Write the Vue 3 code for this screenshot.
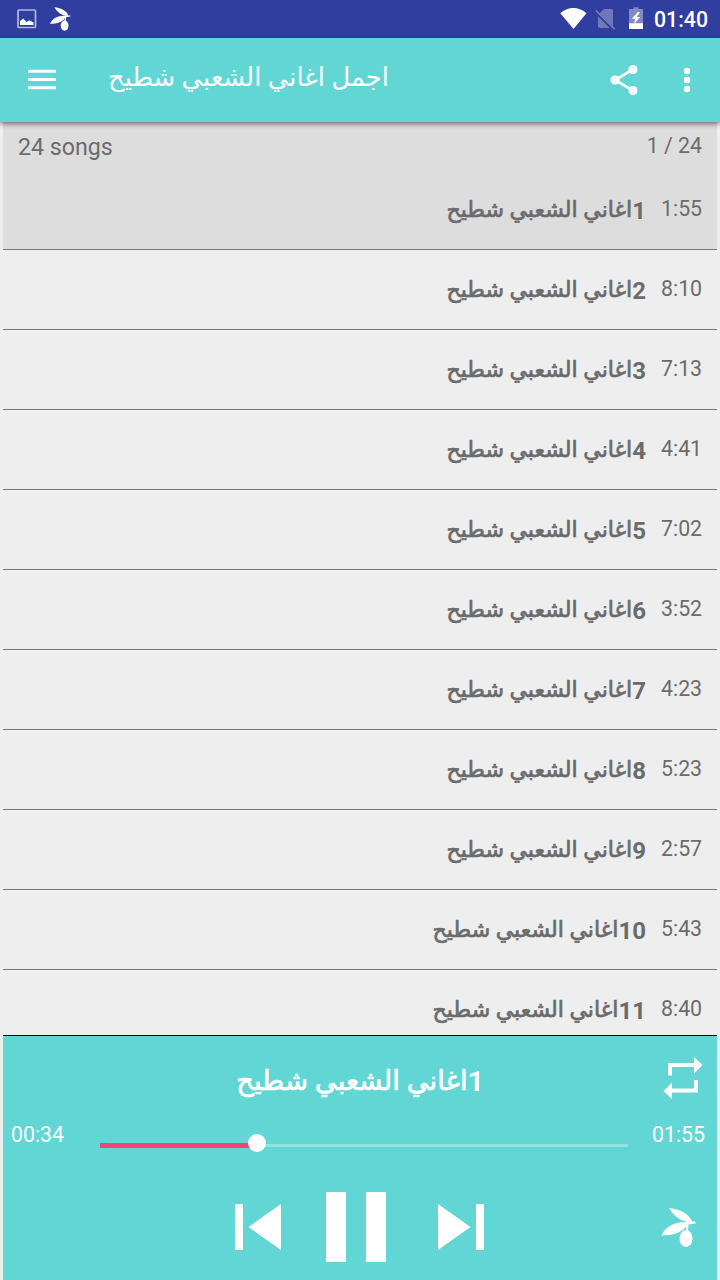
<script setup>
const durations = ['1:55', '8:10', '7:13', '4:41', '7:02', '3:52', '4:23', '5:23', '2:57', '5:43', '8:40']
const songs = durations.map((time, i) => ({ id: i + 1, time }))
const name = 'اغاني الشعبي شطيح'
const progress = 29.7
</script>

<template>
  <div class="screen">
    <div class="status">
      <svg class="s-left" width="80" height="38" viewBox="0 0 80 38">
        <rect x="18" y="10" width="17.5" height="17.5" rx="1" fill="none" stroke="#b4b9de" stroke-width="1.7" />
        <path d="M20 25V21L23.2 18.5L26.5 22L29.5 20.2L33.5 22.5V25Z" fill="#fff" />
        <g transform="translate(37.3 -3.8) scale(.6)" fill="#fff">
          <path d="M28.5 18.5C38 19 49 24 52 33C42 33 34 28 28.5 18.5Z" />
          <path d="M21 46C25 36 38 31 48 33C44 43 33 46 21 46Z" />
          <path d="M46 32L55 32V34L48 35L47.5 42H45.5Z" />
          <ellipse cx="45.5" cy="49" rx="6.5" ry="8.5" />
        </g>
      </svg>
      <svg class="s-right" width="92" height="38" viewBox="556 0 92 38">
        <path d="M560.3 13.2Q573.3 3 586.5 13.2L573.5 29Z" fill="#fff" />
        <path d="M598 15L604 9H611.5Q613 9 613 10.5V28H600Q598 28 598 26Z" fill="#717ab9" />
        <path d="M595.3 11.2L614.2 30" stroke="#303e9f" stroke-width="3.4" />
        <path d="M595.8 10.5L614.7 29.2" stroke="#7c84bf" stroke-width="1.5" />
        <path d="M629 9H633.5V7.3H638.5V9H643V24H629Z" fill="#8389c4" />
        <path d="M629 23.3H643V29H629Z M637.8 12L631.8 18.8H635L634.3 23.8L640.2 17H636.8L640 12Z" fill="#fff" />
      </svg>
      <span class="clock">01:40</span>
    </div>

    <header class="toolbar">
      <svg class="menu" width="28" height="22" viewBox="0 0 28 22">
        <path d="M0 2.3H28M0 10.5H28M0 18.7H28" stroke="#fff" stroke-width="3.1" />
      </svg>
      <h1 class="ar" dir="rtl">اجمل اغاني الشعبي شطيح</h1>
      <svg class="share" width="28" height="32" viewBox="0 0 28 32">
        <path d="M23 5.5L5 16L23 26.5" fill="none" stroke="#fff" stroke-width="2.7" />
        <g fill="#fff"><circle cx="23" cy="5.5" r="4.5" /><circle cx="5" cy="16" r="4.5" /><circle cx="23" cy="26.5" r="4.5" /></g>
      </svg>
      <svg class="more" width="8" height="26" viewBox="0 0 8 26">
        <g fill="#fff"><circle cx="4" cy="4" r="3.2" /><circle cx="4" cy="13" r="3.2" /><circle cx="4" cy="22" r="3.2" /></g>
      </svg>
    </header>

    <main class="list">
      <div class="summary">
        <span class="count">24 songs</span>
        <span class="index">1 / 24</span>
      </div>
      <div v-for="s in songs" :key="s.id" class="row" :class="{ active: s.id === 1 }">
        <div class="title" dir="rtl"><span class="num">{{ s.id }}</span><span class="ar">{{ name }}</span></div>
        <span class="time">{{ s.time }}</span>
      </div>
    </main>

    <footer class="player">
      <div class="now">
        <div class="title" dir="rtl"><span class="num">1</span><span class="ar">{{ name }}</span></div>
        <svg class="repeat" width="40" height="44" viewBox="0 0 40 44" fill="#fff">
          <path d="M5 18.5V6H31V0L39.5 8L31 16.5V10H9V18.5Z" />
          <path d="M35 23.5V36H9V42.5L.5 34.5L9 26V32H31V23.5Z" transform="translate(0 -.5)" />
        </svg>
      </div>
      <div class="seek">
        <span class="elapsed">00:34</span>
        <div class="track">
          <div class="fill" :style="{ width: progress + '%' }"><i class="knob"></i></div>
        </div>
        <span class="total">01:55</span>
      </div>
      <div class="controls">
        <svg class="prev" width="46" height="46" viewBox="0 0 46 46" fill="#fff"><path d="M0 0H8V46H0ZM46 0V46L13.5 23Z" /></svg>
        <svg class="pause" width="60" height="70" viewBox="0 0 60 70" fill="#fff"><path d="M0 0H20V70H0ZM40 0H60V70H40Z" /></svg>
        <svg class="next" width="46" height="46" viewBox="0 0 46 46" fill="#fff"><path d="M0 0V46L32.5 23ZM38 0H46V46H38Z" /></svg>
        <svg class="olive" width="36" height="42" viewBox="20.5 17.5 36 42" fill="#fff">
          <path d="M28.5 18.5C38 19 49 24 52 33C42 33 34 28 28.5 18.5Z" />
          <path d="M21 46C25 36 38 31 48 33C44 43 33 46 21 46Z" />
          <path d="M46 32L55 32V34L48 35L47.5 42H45.5Z" />
          <ellipse cx="45.5" cy="49" rx="6.5" ry="8.5" />
        </svg>
      </div>
    </footer>
  </div>
</template>

<style>
body { margin: 0; }
</style>

<style scoped>
.screen {
  width: 720px; height: 1280px; overflow: hidden; display: flex; flex-direction: column;
  background: #eee; font-family: Roboto, "Noto Sans", "DejaVu Sans", sans-serif; color: #6b6b6b;
}
svg { display: block; flex: none; }
.status { height: 38px; flex: none; background: #303e9f; display: flex; align-items: center; }
.s-right { margin-left: auto; }
.clock { width: 72px; padding: 2px 0 0 6px; box-sizing: border-box; color: #fff; font-size: 21.3px; font-weight: 500; line-height: 38px; white-space: nowrap; }
.toolbar {
  height: 84px; flex: none; box-sizing: border-box; background: #61d6d5; display: flex; align-items: center;
  padding: 0 29px 0 28px; z-index: 1; box-shadow: 0 2px 5px rgba(0, 0, 0, .5);
}
h1 { margin: 0 0 7px 52px; font-size: 25.8px; font-weight: 400; color: #fff; white-space: nowrap; line-height: 76px; }
.share { margin-left: auto; margin-right: 45px; }
.list { height: 913px; flex: none; margin: 0 3px; overflow: hidden; }
.summary { height: 48px; background: #ddd; display: flex; justify-content: space-between; padding: 0 15px; font-size: 21.3px; line-height: 48px; }
.count { font-size: 23.2px; padding-top: 1px; }
.row { height: 80px; box-sizing: border-box; border-bottom: 1px solid #777; display: flex; justify-content: flex-end; padding-right: 15px; line-height: 78px; font-size: 21.3px; }
.active { background: #ddd; }
.title { display: flex; font-weight: 700; white-space: nowrap; }
.title .ar { font-weight: 400; -webkit-text-stroke: .7px currentColor; }
.row .num { font-size: 24px; padding-top: 2px; }
.row .ar { font-size: 22.1px; }
.time { width: 41px; margin-left: 15px; text-align: right; }
.player { height: 245px; flex: none; box-sizing: border-box; margin: 0 3px; background: #61d6d5; border-top: 1px solid #000; color: #fff; display: flex; flex-direction: column; overflow: hidden; }
.now { height: 84px; flex: none; display: grid; grid-template-columns: 1fr auto; align-items: start; padding-right: 14px; }
.now .title { justify-content: center; font-size: 27.5px; line-height: 90px; padding-left: 54px; }
.now .num { font-size: 28px; padding-top: 1px; }
.repeat { margin-top: 21px; }
.seek { height: 50px; flex: none; display: flex; align-items: center; padding: 0 12px 0 8px; font-size: 21.3px; line-height: 30px; }
.elapsed, .total { width: 53px; flex: none; margin-top: -20px; }
.track { width: 528px; height: 3px; margin: 0 24px 0 36px; background: #92e2e1; display: flex; align-items: center; }
.fill { height: 5px; background: #f9407f; display: flex; align-items: center; justify-content: flex-end; }
.knob { width: 18px; height: 18px; flex: none; border-radius: 50%; background: #fff; margin-right: -9px; margin-top: -4px; }
.controls { height: 114px; flex: none; display: flex; align-items: center; padding-left: 232px; }
.pause { margin: 0 52px 0 45px; }
.olive { margin: 1px 0 0 177px; }
</style>
